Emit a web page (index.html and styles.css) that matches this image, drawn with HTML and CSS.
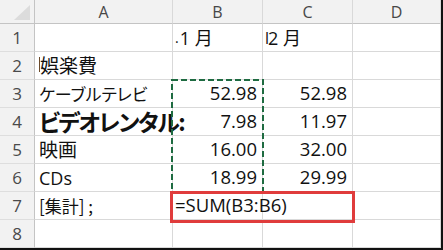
FILE: index.html
```html
<!DOCTYPE html>
<html lang="ja">
<head>
<meta charset="utf-8">
<link rel="stylesheet" href="styles.css">
</head>
<body>
<div class="sheet">
  <div class="grid">
    <div class="corner"><svg width="34" height="23" viewBox="0 0 34 23"><polygon points="30,5 30,20 14,20" fill="#dcdcdc"/></svg></div>
    <div class="colhead">A</div>
    <div class="colhead">B</div>
    <div class="colhead">C</div>
    <div class="colhead">D</div>

    <div class="rowhead">1</div>
    <div class="cell"></div>
    <div class="cell month"><span class="dot">.</span>1 月</div>
    <div class="cell month"><span class="bar">l</span>2 月</div>
    <div class="cell"></div>

    <div class="rowhead">2</div>
    <div class="cell jp kanji"><span class="caret"></span>娯楽費</div>
    <div class="cell"></div>
    <div class="cell"></div>
    <div class="cell"></div>

    <div class="rowhead">3</div>
    <div class="cell jp">ケーブルテレビ</div>
    <div class="cell num">52.98</div>
    <div class="cell num">52.98</div>
    <div class="cell"></div>

    <div class="rowhead">4</div>
    <div class="cell jp big">ビデオレンタル:</div>
    <div class="cell num">7.98</div>
    <div class="cell num">11.97</div>
    <div class="cell"></div>

    <div class="rowhead">5</div>
    <div class="cell jp kanji">映画</div>
    <div class="cell num">16.00</div>
    <div class="cell num">32.00</div>
    <div class="cell"></div>

    <div class="rowhead">6</div>
    <div class="cell txt">CDs</div>
    <div class="cell num">18.99</div>
    <div class="cell num">29.99</div>
    <div class="cell"></div>

    <div class="rowhead">7</div>
    <div class="cell jp total">[集計] ;</div>
    <div class="cell txt formula">=SUM(B3:B6)</div>
    <div class="cell"></div>
    <div class="cell"></div>

    <div class="rowhead">8</div>
    <div class="cell"></div>
    <div class="cell"></div>
    <div class="cell"></div>
    <div class="cell"></div>
  </div>
  <svg class="ants" width="94" height="114" viewBox="0 0 94 114">
    <rect x="1" y="1" width="91" height="112" fill="none" stroke="#1e6b41" stroke-width="2" stroke-dasharray="6 3"/>
  </svg>
  <div class="redbox"></div>
</div>
</body>
</html>
```

FILE: styles.css
```css
html, body {
  margin: 0;
  padding: 0;
  background: #ffffff;
}

.sheet {
  position: relative;
  width: 443px;
  height: 250px;
  box-sizing: border-box;
  border-right: 2px solid #111;
  border-bottom: 2px solid #111;
  font-family: "Open Sans", "Noto Sans CJK JP", sans-serif;
  color: #111;
}

.grid {
  display: grid;
  grid-template-columns: 35px 138px 90px 90px 88px;
  grid-template-rows: 24px repeat(8, 28px);
}

.grid > div {
  box-sizing: border-box;
  border-right: 1px solid #d9d9d9;
  border-bottom: 1px solid #d9d9d9;
  white-space: nowrap;
  overflow: visible;
  display: flex;
  align-items: center;
  line-height: 1;
}

.corner {
  background: #f2f2f2;
  border-bottom-color: #c4c4c4 !important;
  border-right-color: #c4c4c4 !important;
}

.corner svg {
  display: block;
}

.colhead {
  background: #f2f2f2;
  border-bottom-color: #c4c4c4 !important;
  justify-content: center;
  font-size: 16px;
  color: #474747;
}

.rowhead {
  background: #f2f2f2;
  border-right-color: #c4c4c4 !important;
  border-bottom-color: #dedede !important;
  justify-content: center;
  font-size: 17px;
  color: #4a4a4a;
}

.cell {
  font-size: 18px;
  padding: 0 4px 0 4px;
}

.num {
  justify-content: flex-end;
  padding-right: 5px;
  font-size: 18.5px;
}

.txt {
  padding-left: 4px;
}

.jp {
  font-family: "Noto Sans CJK JP", sans-serif;
  font-feature-settings: "palt";
  font-size: 17px;
  padding-left: 4px;
}

.kanji {
  font-size: 19px;
  letter-spacing: 0;
  padding-bottom: 3px;
}

.caret {
  display: inline-block;
  width: 1px;
  height: 15px;
  background: #6b4a2a;
  margin-right: 0;
}

.big {
  font-size: 23px;
  font-weight: bold;
  letter-spacing: -1.6px;
  line-height: 0.9;
  position: relative;
  z-index: 1;
}

.total {
  font-size: 17px;
}

.month {
  font-family: "Open Sans", "Noto Sans CJK JP", sans-serif;
  font-size: 18px;
  padding-left: 2px;
}

.dot {
  font-size: 14px;
  margin-right: 1px;
}

.bar {
  font-size: 16px;
  margin-right: -1px;
}

.formula {
  padding-left: 2px;
  font-size: 18.5px;
}

.ants {
  position: absolute;
  left: 171px;
  top: 79px;
  z-index: 2;
}

.redbox {
  position: absolute;
  left: 170px;
  top: 191px;
  width: 185px;
  height: 32px;
  box-sizing: border-box;
  border: 3px solid #e03c3c;
  z-index: 3;
}
```
